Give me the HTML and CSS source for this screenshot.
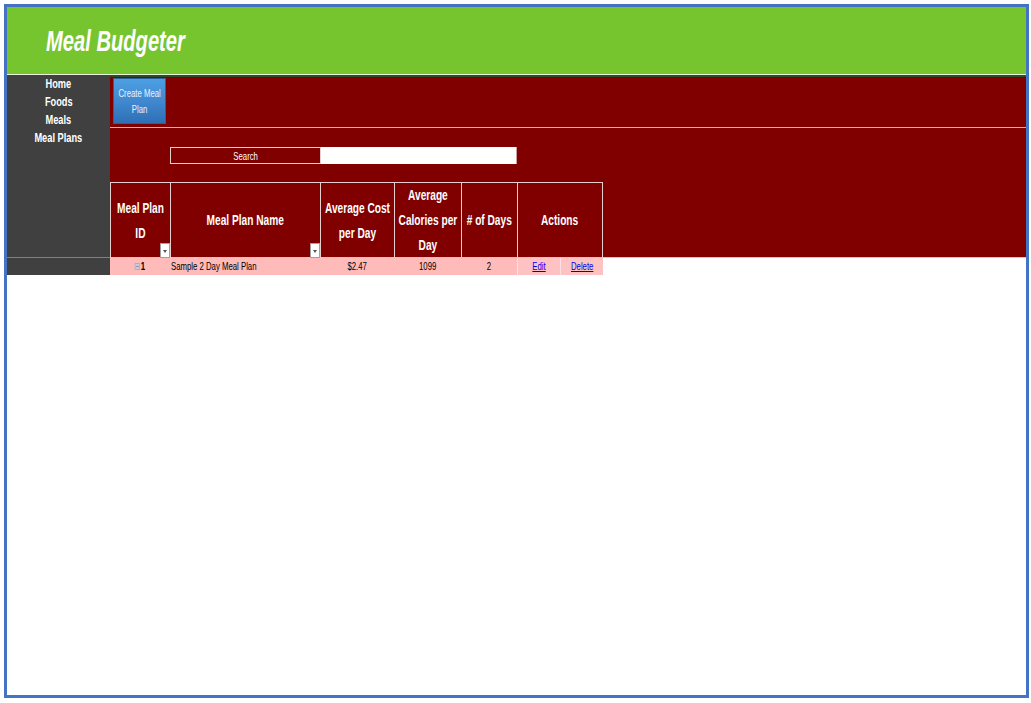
FILE: index.html
```html
<!DOCTYPE html>
<html>
<head>
<meta charset="utf-8">
<link rel="stylesheet" href="styles.css">
</head>
<body>
<div class="frame">
  <header class="banner"><h1 class="title">Meal Budgeter</h1></header>
  <div class="sheet">
    <nav class="side">
      <a class="nav-item"><span class="cond">Home</span></a>
      <a class="nav-item"><span class="cond">Foods</span></a>
      <a class="nav-item"><span class="cond">Meals</span></a>
      <a class="nav-item"><span class="cond">Meal Plans</span></a>
    </nav>
    <section class="panel">
      <div class="toolbar">
        <button class="create-btn"><span class="cond">Create Meal<br>Plan</span></button>
      </div>
      <div class="search-row">
        <div class="search-label"><span class="cond">Search</span></div>
        <div class="search-input"></div>
      </div>
      <div class="thead">
        <div class="th"><span class="cond">Meal Plan<br>ID</span><i class="filter"></i></div>
        <div class="th"><span class="cond">Meal Plan Name</span><i class="filter"></i></div>
        <div class="th"><span class="cond">Average Cost<br>per Day</span></div>
        <div class="th"><span class="cond">Average<br>Calories per<br>Day</span></div>
        <div class="th"><span class="cond"># of Days</span></div>
        <div class="th"><span class="cond">Actions</span></div>
      </div>
    </section>
    <div class="side-foot"></div>
    <div class="rows">
      <div class="tr">
        <div class="td center"><span class="cond"><span class="expander">−</span><b>1</b></span></div>
        <div class="td left"><span class="cond">Sample 2 Day Meal Plan</span></div>
        <div class="td center"><span class="cond">$2.47</span></div>
        <div class="td center"><span class="cond">1099</span></div>
        <div class="td center"><span class="cond">2</span></div>
        <div class="td action"><a class="link cond">Edit</a></div>
        <div class="td action"><a class="link cond">Delete</a></div>
      </div>
    </div>
  </div>
</div>
</body>
</html>
```
FILE: styles.css
```css
* { box-sizing: border-box; }
html, body { margin: 0; padding: 0; background: #ffffff; }
body { font-family: "Liberation Sans", Arial, sans-serif; }

.cond {
  display: inline-block;
  white-space: nowrap;
  transform: scaleX(0.74);
  transform-origin: center center;
}

.frame {
  margin: 4px 0 0 4px;
  width: 1025px;
  height: 694px;
  border: 3px solid #4472C4;
  background: #ffffff;
}

.banner {
  height: 70px;
  background: #76C52F;
  border-bottom: 2px solid #2E4A2A;
  box-shadow: inset 0 -1px 0 #E8F5DA;
  display: flex;
  align-items: center;
  padding-left: 39px;
}
.title {
  margin: 0;
  color: #ffffff;
  font-style: italic;
  font-weight: bold;
  font-size: 29px;
  transform: scaleX(0.695);
  transform-origin: left center;
  line-height: 1;
}

.sheet {
  display: grid;
  grid-template-columns: 103px 1fr;
  grid-template-rows: 180px 18px;
}

.side {
  background: #404040;
  display: flex;
  flex-direction: column;
  align-items: center;
  margin-top: -2px;
}
.nav-item {
  color: #ffffff;
  font-weight: bold;
  font-size: 12.5px;
  line-height: 18px;
}

.panel {
  background: #800000;
  display: flex;
  flex-direction: column;
}
.toolbar {
  height: 52px;
  border-bottom: 1px solid #D9B0B0;
  padding: 1px 0 0 3px;
}
.create-btn {
  width: 53px;
  height: 46px;
  border: 1px solid #2F5F95;
  background: linear-gradient(#4D9FE2, #3F86CE 55%, #2F6FB4);
  color: #EAF2FB;
  font-family: inherit;
  font-size: 10.5px;
  line-height: 16px;
  padding: 0;
  display: flex;
  align-items: center;
  justify-content: center;
  text-align: center;
}

.search-row {
  display: flex;
  margin: 19px 0 0 60px;
  height: 17px;
}
.search-label {
  width: 151px;
  border: 1px solid #E8CFCF;
  color: #ffffff;
  font-size: 10.5px;
  display: flex;
  align-items: center;
  justify-content: center;
}
.search-input {
  width: 196px;
  background: #ffffff;
  border-right: 1px solid #C9A0A0;
}

.thead {
  margin-top: 18px;
  display: grid;
  grid-template-columns: 60px 150px 74px 67px 56px 86px;
  width: 493px;
  height: 75px;
  border-top: 1px solid #E8CFCF;
}
.th {
  position: relative;
  border-left: 1px solid #E8CFCF;
  display: flex;
  align-items: center;
  justify-content: center;
  text-align: center;
  color: #ffffff;
  font-weight: bold;
  font-size: 14.5px;
  line-height: 25px;
}
.th:last-child { border-right: 1px solid #E8CFCF; }
.th .cond { transform: scaleX(0.7); }
.filter {
  position: absolute;
  right: 0;
  bottom: 0;
  width: 10px;
  height: 15px;
  background: #ffffff;
  border: 1px solid #A0A0A0;
}
.filter::after {
  content: "";
  position: absolute;
  left: 2px;
  top: 6px;
  border-left: 2.5px solid transparent;
  border-right: 2.5px solid transparent;
  border-top: 3px solid #555;
}

.side-foot {
  background: #404040;
  border-top: 1px solid #808080;
}

.rows { border-top: 1px solid #E0C0C0; }
.tr {
  display: grid;
  grid-template-columns: 60px 150px 74px 67px 56px 43px 43px;
  width: 493px;
  height: 17px;
  background: #FFBABA;
}
.td {
  font-size: 10.5px;
  line-height: 17px;
  color: #000000;
  white-space: nowrap;
}
.td.center { text-align: center; }
.td.left { padding-left: 1px; }
.td.left .cond { transform-origin: left center; }
.td.action {
  text-align: center;
  background: #FFC2C2;
  border-left: 1px solid #FFE0E0;
}
.link {
  color: #0000EE;
  text-decoration: underline;
}
.expander {
  display: inline-block;
  width: 7px;
  height: 7px;
  font-size: 7px;
  line-height: 5px;
  text-align: center;
  background: #C8CCD8;
  color: #556;
  border: 1px solid #A8B0C0;
  vertical-align: 1px;
  margin-right: 1px;
}
```
